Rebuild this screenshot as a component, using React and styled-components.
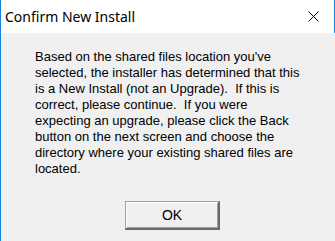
import React from "react";
import styled, { createGlobalStyle } from "styled-components";

const GlobalStyle = createGlobalStyle`
  html, body {
    margin: 0;
    padding: 0;
    background: #f0f0f0;
  }
`;

const Window = styled.div`
  width: 335px;
  height: 241px;
  display: flex;
  flex-direction: column;
  box-sizing: border-box;
  border-left: 1px solid #1883d7;
  background: #f0f0f0;
  overflow: hidden;
`;

const TitleBar = styled.div`
  height: 33px;
  flex: none;
  display: flex;
  align-items: center;
  justify-content: space-between;
  box-sizing: border-box;
  background: #fff;
  border-right: 1px solid #1883d7;
  padding: 0 0 1px 4px;
`;

const Title = styled.span`
  font-family: "Segoe UI", "Noto Sans", sans-serif;
  font-size: 14px;
  color: #000;
`;

const CloseButton = styled.div`
  width: 42px;
  height: 32px;
  display: flex;
  align-items: center;
  justify-content: center;
`;

const Body = styled.div`
  flex: 1;
  display: flex;
  flex-direction: column;
  padding: 16px 0 0 34px;
`;

const Message = styled.p`
  margin: 0;
  font-family: "Liberation Sans", Arial, sans-serif;
  font-size: 13px;
  line-height: 16px;
  color: #000;
  white-space: pre;
`;

const Footer = styled.div`
  display: flex;
  padding-left: 90px;
  margin-top: 24px;
`;

const PushButton = styled.button`
  width: 95px;
  height: 29px;
  box-sizing: border-box;
  background: #f0f0f0;
  border: 1px solid #a0a0a0;
  border-right: 2px solid #696969;
  border-bottom: 2px solid #696969;
  box-shadow: inset 1px 1px 0 #fff, inset -1px -1px 0 #a0a0a0;
  font-family: "Liberation Sans", Arial, sans-serif;
  font-size: 14px;
  color: #000;
  padding: 0;
`;

const lines = [
  "Based on the shared files location you've",
  "selected, the installer has determined that this",
  "is a New Install (not an Upgrade).  If this is",
  "correct, please continue.  If you were",
  "expecting an upgrade, please click the Back",
  "button on the next screen and choose the",
  "directory where your existing shared files are",
  "located.",
];

export default function App() {
  return (
    <>
      <GlobalStyle />
      <Window>
        <TitleBar>
          <Title>Confirm New Install</Title>
          <CloseButton>
            <svg width="11" height="11" viewBox="0 0 11 11">
              <path d="M0.5 0.5 L10.5 10.5 M10.5 0.5 L0.5 10.5" stroke="#000" strokeWidth="1" />
            </svg>
          </CloseButton>
        </TitleBar>
        <Body>
          <Message>{lines.join("\n")}</Message>
          <Footer>
            <PushButton>OK</PushButton>
          </Footer>
        </Body>
      </Window>
    </>
  );
}
